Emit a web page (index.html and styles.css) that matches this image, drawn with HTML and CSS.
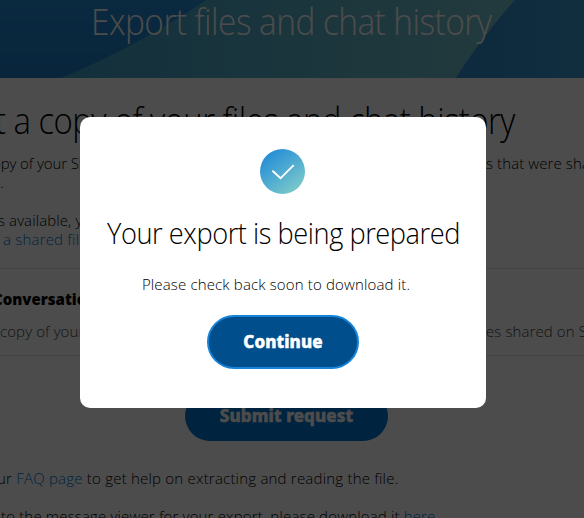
FILE: index.html
```html
<!DOCTYPE html>
<html lang="en">
<head>
<meta charset="utf-8">
<title>Export files and chat history</title>
<link rel="stylesheet" href="styles.css">
</head>
<body>
<div class="page">
  <header class="banner">
    <svg class="banner-art" viewBox="0 0 584 78" aria-hidden="true">
      <defs>
        <linearGradient id="sky" x1="0" y1="0" x2="0" y2="1"><stop offset="0" stop-color="#238dd7"/><stop offset="1" stop-color="#1c7cc8"/></linearGradient>
        <linearGradient id="wave" x1="0" y1="0" x2="1" y2="0"><stop offset="0" stop-color="#3c9fc8"/><stop offset="1" stop-color="#76c4cc"/></linearGradient>
        <linearGradient id="edge" x1="0" y1="0" x2="1" y2="0"><stop offset="0" stop-color="#2c8ccf"/><stop offset="1" stop-color="#3b9bd4"/></linearGradient>
      </defs>
      <rect width="584" height="78" fill="url(#sky)"/>
      <path d="M61 78Q138 46 206 0H515Q482 37 456 78Z" fill="url(#wave)"/>
      <path d="M456 78Q482 37 515 0H584V78Z" fill="url(#edge)"/>
    </svg>
    <h1 class="banner-title">Export files and chat history</h1>
  </header>
  <main class="content">
    <h2 class="title">t a copy of your files and chat history</h2>
    <div class="row intro"><span class="start">opy of your Skype</span><span class="end">s that were shared</span></div>
    <div class="row">.</div>
    <div class="row available"><span class="start">s available, you</span></div>
    <div class="row link-row"><a class="start">a shared file</a></div>
    <section class="option">
      <h3 class="option-title">Conversations</h3>
      <div class="row muted"><span class="start">copy of your</span><span class="end">es shared on Skype</span></div>
    </section>
    <div class="submit">Submit request</div>
    <p class="help faq">ur <a>FAQ page</a> to get help on extracting and reading the file.</p>
    <p class="help viewer">to the message viewer for your export, please download it <a>here</a>.</p>
  </main>
</div>
<div class="overlay">
  <div class="modal" role="dialog">
    <svg class="check" viewBox="0 0 45 45" aria-hidden="true">
      <defs><linearGradient id="disc" x1="0.15" y1="0.05" x2="0.85" y2="0.95"><stop offset="0" stop-color="#228bd8"/><stop offset="1" stop-color="#7dcbc9"/></linearGradient></defs>
      <circle cx="22.5" cy="22.5" r="22.5" fill="url(#disc)"/>
      <path d="M13 22.2L20.5 29.3L33.2 16.7" fill="none" stroke="#fff" stroke-width="1.9" stroke-linecap="round" stroke-linejoin="miter"/>
    </svg>
    <h2 class="modal-title">Your export is being prepared</h2>
    <p class="modal-text">Please check back soon to download it.</p>
    <button class="continue">Continue</button>
  </div>
</div>
</body>
</html>
```

FILE: styles.css
```css
* { box-sizing: border-box; }
body {
  margin: 0;
  width: 584px;
  height: 518px;
  overflow: hidden;
  position: relative;
  background: #fff;
  color: #000;
  font: 300 15px/19px "Open Sans", "Noto Sans", sans-serif;
}
h1, h2, h3, p { margin: 0; font-weight: 300; white-space: nowrap; }
a { color: #0078d4; }
.page { height: 518px; overflow: hidden; }
.banner { display: grid; height: 78px; }
.banner > * { grid-area: 1 / 1; }
.banner-art { width: 584px; height: 78px; }
.banner-title { margin-left: 91px; color: #fff; font-size: 36px; line-height: 44px; letter-spacing: -0.6px; transform: scaleX(0.929); transform-origin: 0 0; }
.title { margin-top: 21px; height: 44px; margin-left: -5px; font-size: 36px; line-height: 44px; letter-spacing: -0.6px; transform: scaleX(0.915); transform-origin: 0 0; }
.row { display: grid; grid-template-columns: 80px 406px 98px; height: 19px; white-space: nowrap; letter-spacing: 0.1px; overflow: hidden; }
.start { grid-column: 1; overflow: hidden; }
.end { grid-column: 3; overflow: hidden; }
.intro { margin-top: 11px; }
.intro .start { margin-left: -8px; letter-spacing: -0.1px; }
.available { margin-top: 19px; }
.available .start { margin-left: -2px; }
.link-row { padding-left: 3px; letter-spacing: 0.2px; }
.option { margin-top: 19px; height: 88px; border-top: 1px solid #e2e2e2; border-bottom: 1px solid #e2e2e2; }
.option-title { margin: 21px 0 13px -7px; font-size: 15px; line-height: 19px; font-weight: 800; }
.muted { color: #444; }
.submit { width: 203px; height: 50px; margin: 35px 0 0 185px; border-radius: 25px; background: #0078d4; color: #fff; font: 800 17px/50px "Noto Sans", sans-serif; letter-spacing: 0.1px; -webkit-text-stroke: 0.5px #fff; text-align: center; }
.help { letter-spacing: 0.21px; }
.faq { margin: 28px 0 0 -3px; }
.viewer { margin-top: 19px; padding-left: 1px; letter-spacing: 0.16px; }
.overlay { position: absolute; inset: 0; background: rgba(0, 0, 0, 0.7); padding: 117px 0 0 80px; }
.modal { width: 406px; height: 291px; border-radius: 10px; background: #fff; display: flex; flex-direction: column; align-items: center; padding-top: 32px; }
.check { width: 45px; height: 45px; margin-right: 1px; }
.modal-title { margin-top: 19px; font-size: 30px; line-height: 40px; letter-spacing: -0.5px; transform: scaleX(0.907); }
.modal-text { margin-top: 22px; margin-right: 14px; letter-spacing: 0.15px; }
.continue { margin-top: 21px; width: 152px; height: 54px; border: 2px solid #1683d8; border-radius: 27px; background: #004e8c; color: #fff; font: 800 17px/50px "Noto Sans", sans-serif; letter-spacing: 0.1px; -webkit-text-stroke: 0.5px #fff; padding: 0; }
```
